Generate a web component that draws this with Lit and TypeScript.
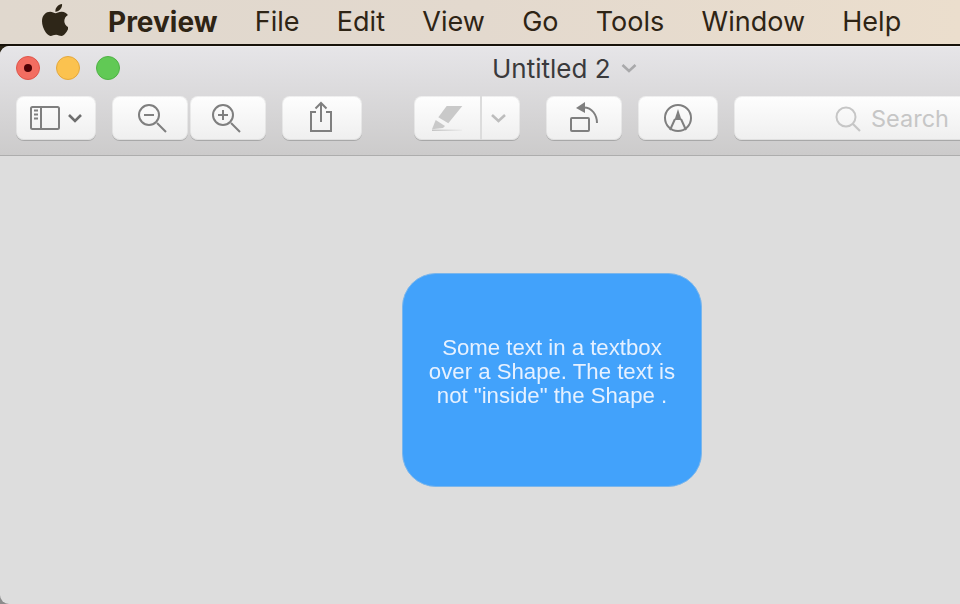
import { LitElement, html, css, svg } from "lit";
import { customElement } from "lit/decorators.js";

const icon = (w: number, body: unknown) =>
  html`<svg class="ico" width=${w} height="44" viewBox="0 0 ${w} 44">${body}</svg>`;

@customElement("app-root")
export class AppRoot extends LitElement {
  static styles = css`
    :host { display: block; width: 960px; height: 604px; overflow: hidden; background: linear-gradient(#2a2416 0, #2a2416 80px, #8c8c8c 560px, #8c8c8c 100%); font-family: Inter, "Liberation Sans", sans-serif; }
    .menu { height: 44px; box-sizing: content-box; border-bottom: 2px solid #17120a; background: linear-gradient(90deg, #e0d8ce 0%, #e3d9ce 50%, #ebdecd 100%); display: flex; align-items: center; color: #2e2415; font-size: 27px; padding-left: 42px; gap: 37.3px; white-space: nowrap; }
    .apple { width: 26px; height: 32px; margin: -4px 2.7px 0 0; fill: #2e2618; flex: none; }
    .menu b { font-weight: 700; font-size: 28px; }
    .menu span { line-height: 44px; }
    .win { height: 558px; border-radius: 9px 0 0 9px; overflow: hidden; background: #dddddd; display: flex; flex-direction: column; }
    .bar { height: 110px; flex: none; box-sizing: border-box; border-top: 1px solid #f0eff1; border-bottom: 1px solid #adadad; background: linear-gradient(#e6e5e8, #cccbcb); }
    .title-row { height: 42px; display: flex; align-items: center; padding-left: 16px; }
    .lights { display: flex; gap: 16px; width: 476px; flex: none; }
    .light { width: 24px; height: 24px; box-sizing: border-box; border-radius: 50%; border: 1px solid; display: flex; align-items: center; justify-content: center; }
    .red { background: #f26d61; border-color: #e0554a; }
    .red i { width: 8px; height: 8px; border-radius: 50%; background: #4d0205; }
    .yellow { background: #fbc24f; border-color: #e4a83c; }
    .green { background: #61c955; border-color: #4fb245; }
    .title { font-size: 26px; color: #3a3a3c; white-space: nowrap; }
    .tchev { margin-left: 10px; }
    .tools { display: flex; padding-left: 16px; height: 44px; margin-top: 7px; }
    .btn { height: 44px; box-sizing: border-box; flex: none; border-radius: 8px; background: linear-gradient(#fefefe, #efefef); box-shadow: 0 1px 0 #a8a8a8, inset 0 0 0 1px rgba(0, 0, 0, 0.06); display: flex; align-items: center; }
    .ico { display: block; flex: none; }
    .s { fill: none; stroke: #7f7f7f; stroke-width: 2; }
    .mt16 { margin-left: 16px; }
    .m2 { margin-left: 2px; }
    .m52 { margin-left: 52px; }
    .m26 { margin-left: 26px; }
    .split { border-left: 2px solid #dcdcdc; }
    .search { width: 240px; padding-left: 100px; margin-left: 16px; gap: 9px; color: #c6c6c6; font-size: 23.5px; }
    .search span { line-height: 44px; padding-top: 2px; }
    .canvas { flex: 1; padding: 117px 0 0 402px; }
    .shape { width: 300px; height: 214px; box-sizing: border-box; padding-bottom: 16px; border-radius: 34px; background: #42a2fb; border: 1px solid #7ab6ec; display: flex; align-items: center; justify-content: center; text-align: center; color: #e6f1ff; font: 22.2px/24px "Liberation Sans", Arial, sans-serif; white-space: nowrap; }
    .shape p { margin: 0; filter: blur(0.6px); }
  `;

  render() {
    return html`
      <div class="menu">
        <svg class="apple" viewBox="4 32 366 448"><path d="M318.7 268.7c-.2-36.7 16.4-64.4 50-84.8-18.8-26.9-47.2-41.7-84.7-44.6-35.5-2.8-74.3 20.7-88.5 20.7-15 0-49.4-19.7-76.4-19.7C63.3 141.2 4 184.8 4 273.5q0 39.3 14.4 81.2c12.8 36.7 59 126.7 107.2 125.2 25.2-.6 43-17.9 75.8-17.9 31.8 0 48.3 17.9 76.4 17.9 48.6-.7 90.4-82.5 102.6-119.3-65.2-30.7-61.7-90-61.7-91.9zm-56.6-164.2c27.3-32.4 24.8-61.9 24-72.5-24.1 1.4-52 16.4-67.9 34.9-17.5 19.8-27.8 44.3-25.6 71.9 26.1 2 49.9-11.4 69.5-34.3z"/></svg>
        <span><b>Preview</b></span><span>File</span><span>Edit</span><span>View</span><span>Go</span><span>Tools</span><span>Window</span><span>Help</span>
      </div>
      <div class="win">
        <div class="bar">
          <div class="title-row">
            <div class="lights">
              <div class="light red"><i></i></div>
              <div class="light yellow"></div>
              <div class="light green"></div>
            </div>
            <span class="title">Untitled 2</span>
            <svg class="tchev" width="16" height="10" viewBox="0 0 16 10"><path d="M1.5 2 L8 8 L14.5 2" fill="none" stroke="#a9a9ab" stroke-width="2.6"/></svg>
          </div>
          <div class="tools">
            <div class="btn">${icon(80, svg`
              <rect class="s" x="15" y="11" width="28" height="22" rx="1.5"/>
              <path class="s" d="M25 11 V33"/>
              <path class="s" d="M18 14.5 H22 M18 18.5 H22 M18 22.5 H22"/>
              <path class="s" d="M53 19 L59 25 L65 19" style="stroke-width:2.6;stroke:#6e6e6e"/>`)}</div>
            <div class="btn mt16">${icon(76, svg`
              <circle class="s" cx="37" cy="19" r="10"/>
              <path class="s" d="M32 19 H42 M45 27 L54 36"/>`)}</div>
            <div class="btn m2">${icon(76, svg`
              <circle class="s" cx="33" cy="19" r="10"/>
              <path class="s" d="M28 19 H38 M33 14 V24 M41 27 L50 36"/>`)}</div>
            <div class="btn mt16">${icon(80, svg`
              <path class="s" d="M34 16 H29 V35 H49 V16 H44"/>
              <path class="s" d="M39 7 V26 M33.5 12.5 L39 7 L44.5 12.5"/>`)}</div>
            <div class="btn m52">
              ${icon(66, svg`
                <polygon points="32.7,10 48.3,10 34.3,27.3 24.3,21.3" fill="#c9c9c9"/>
                <polygon points="21.7,24 31,30 29,32 18,33.3" fill="#c9c9c9"/>
                <defs><linearGradient id="fade"><stop offset="0" stop-color="#c4c4c4"/><stop offset="1" stop-color="#ececec"/></linearGradient></defs>
                <rect x="18" y="33.5" width="30" height="1.5" fill="url(#fade)"/>`)}
              <div class="split">${icon(38, svg`<path d="M10 19 L16.5 25 L23 19" fill="none" stroke="#bdbdbd" stroke-width="2.6"/>`)}</div>
            </div>
            <div class="btn m26">${icon(76, svg`
              <rect class="s" x="25" y="22" width="18" height="13" rx="1"/>
              <polygon points="30,12 39,6 39,17" fill="#7f7f7f"/>
              <path class="s" d="M38 11.5 C46 11.5 51 19 51 27"/>`)}</div>
            <div class="btn mt16">${icon(80, svg`
              <circle class="s" cx="40" cy="22" r="13"/>
              <path class="s" d="M37 23 L32 34 M43 23 L48 34"/>
              <polygon points="40,13 36.5,24 43.5,24" fill="#7f7f7f"/>`)}</div>
            <div class="btn search">
              <svg class="ico" width="28" height="44" viewBox="0 0 28 44"><circle cx="12" cy="21" r="9.5" fill="none" stroke="#c6c6c6" stroke-width="2"/><path d="M19 28 L26 35" stroke="#c6c6c6" stroke-width="2.2"/></svg>
              <span>Search</span>
            </div>
          </div>
        </div>
        <div class="canvas">
          <div class="shape"><p>Some text in a textbox<br>over a Shape. The text is<br>not "inside" the Shape .</p></div>
        </div>
      </div>
    `;
  }
}
